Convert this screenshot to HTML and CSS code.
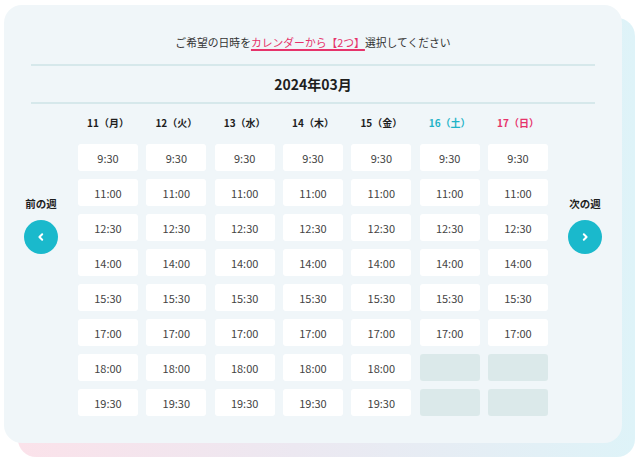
FILE: index.html
```html
<!DOCTYPE html>
<html lang="ja">
<head>
<meta charset="utf-8">
<title>日時選択</title>
<link rel="stylesheet" href="styles.css">
</head>
<body>
<div class="frame">
  <div class="card">
    <p class="lead">ご希望の日時を<span class="accent">カレンダーから【2つ】</span>選択してください</p>
    <h2 class="month">2024年03月</h2>
    <div class="calendar">
      <div class="nav">
        <span class="nav-label">前の週</span>
        <button class="nav-btn" type="button" aria-label="前の週">
          <svg viewBox="0 0 12 12" width="12" height="12"><path d="M7.2 3.2 L4.4 6 L7.2 8.8" fill="none" stroke="#fff" stroke-width="2" stroke-linecap="round" stroke-linejoin="round"/></svg>
        </button>
      </div>
      <div class="week">
        <div class="heads">
          <span>11（月）</span><span>12（火）</span><span>13（水）</span><span>14（木）</span><span>15（金）</span><span class="sat">16（土）</span><span class="sun">17（日）</span>
        </div>
        <div class="slots">
          <span class="slot">9:30</span><span class="slot">9:30</span><span class="slot">9:30</span><span class="slot">9:30</span><span class="slot">9:30</span><span class="slot">9:30</span><span class="slot">9:30</span>
          <span class="slot">11:00</span><span class="slot">11:00</span><span class="slot">11:00</span><span class="slot">11:00</span><span class="slot">11:00</span><span class="slot">11:00</span><span class="slot">11:00</span>
          <span class="slot">12:30</span><span class="slot">12:30</span><span class="slot">12:30</span><span class="slot">12:30</span><span class="slot">12:30</span><span class="slot">12:30</span><span class="slot">12:30</span>
          <span class="slot">14:00</span><span class="slot">14:00</span><span class="slot">14:00</span><span class="slot">14:00</span><span class="slot">14:00</span><span class="slot">14:00</span><span class="slot">14:00</span>
          <span class="slot">15:30</span><span class="slot">15:30</span><span class="slot">15:30</span><span class="slot">15:30</span><span class="slot">15:30</span><span class="slot">15:30</span><span class="slot">15:30</span>
          <span class="slot">17:00</span><span class="slot">17:00</span><span class="slot">17:00</span><span class="slot">17:00</span><span class="slot">17:00</span><span class="slot">17:00</span><span class="slot">17:00</span>
          <span class="slot">18:00</span><span class="slot">18:00</span><span class="slot">18:00</span><span class="slot">18:00</span><span class="slot">18:00</span><span class="slot off"></span><span class="slot off"></span>
          <span class="slot">19:30</span><span class="slot">19:30</span><span class="slot">19:30</span><span class="slot">19:30</span><span class="slot">19:30</span><span class="slot off"></span><span class="slot off"></span>
        </div>
      </div>
      <div class="nav">
        <span class="nav-label">次の週</span>
        <button class="nav-btn" type="button" aria-label="次の週">
          <svg viewBox="0 0 12 12" width="12" height="12"><path d="M4.8 3.2 L7.6 6 L4.8 8.8" fill="none" stroke="#fff" stroke-width="2" stroke-linecap="round" stroke-linejoin="round"/></svg>
        </button>
      </div>
    </div>
  </div>
</div>
</body>
</html>
```
FILE: styles.css
```css
* { box-sizing: border-box; }
html, body {
  margin: 0;
  background: #ffffff;
}
body {
  font-family: "Noto Sans CJK JP", "Noto Sans", sans-serif;
  color: #333;
}
.frame {
  position: relative;
  width: 640px;
  height: 459px;
  padding: 5px 0 0 4px;
}
.frame::before {
  content: "";
  position: absolute;
  left: 18px;
  top: 18px;
  width: 617px;
  height: 439px;
  border-radius: 18px;
  background: linear-gradient(90deg, #fbe2ea 0%, #ece8f1 45%, #def3f8 100%);
}
.card {
  position: relative;
  width: 618px;
  height: 438px;
  background: #f0f6f9;
  border-radius: 18px;
}
.lead {
  margin: 0 27px;
  padding: 28px 0 13px;
  line-height: 18px;
  font-size: 10.8px;
  text-align: center;
  color: #333;
  border-bottom: 2px solid #d6e8eb;
}
.accent {
  color: #e6336b;
  text-decoration: underline;
  text-decoration-thickness: 1.5px;
  text-underline-offset: 2px;
}
.month {
  margin: 0 27px;
  padding: 8px 0;
  line-height: 20px;
  font-size: 14px;
  font-weight: 700;
  text-align: center;
  color: #1e1e1e;
  border-bottom: 2px solid #d6e8eb;
}
.calendar {
  display: flex;
}
.nav {
  width: 74px;
  display: flex;
  flex-direction: column;
  align-items: center;
  padding-top: 92px;
}
.nav-label {
  line-height: 16px;
  font-size: 10.5px;
  font-weight: 700;
  color: #1e1e1e;
}
.nav-btn {
  margin-top: 8px;
  width: 34px;
  height: 34px;
  border: 0;
  padding: 0;
  border-radius: 50%;
  background: #1ab9cc;
  display: flex;
  align-items: center;
  justify-content: center;
}
.week {
  width: 470px;
}
.heads {
  display: grid;
  grid-template-columns: repeat(7, 1fr);
  column-gap: 8.33px;
  padding-top: 10px;
  margin-bottom: 12px;
  line-height: 18px;
  font-size: 10px;
  font-weight: 700;
  text-align: center;
  color: #1e1e1e;
}
.heads .sat { color: #1fb3c7; }
.heads .sun { color: #e6336b; }
.slots {
  display: grid;
  grid-template-columns: repeat(7, 1fr);
  grid-auto-rows: 27px;
  column-gap: 8.33px;
  row-gap: 8px;
}
.slot {
  display: flex;
  align-items: center;
  justify-content: center;
  background: #ffffff;
  border-radius: 3px;
  font-size: 11px;
  color: #444;
}
.slot.off {
  background: #dbe9ea;
}
```
